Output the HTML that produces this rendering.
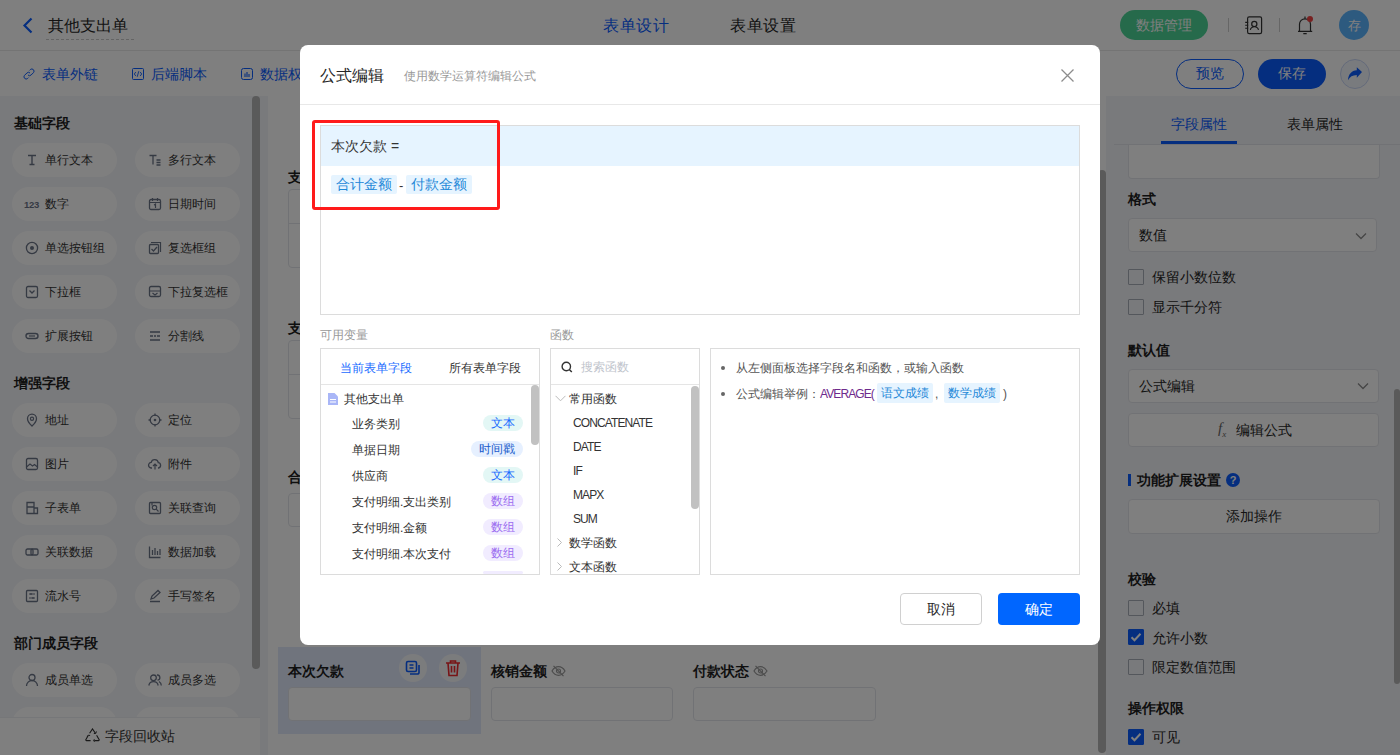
<!DOCTYPE html>
<html><head><meta charset="utf-8">
<style>
*{box-sizing:border-box;margin:0;padding:0}
html,body{width:1400px;height:755px;overflow:hidden;background:#fff}
body{font-family:"Liberation Sans",sans-serif;color:#262626;position:relative}
.a{position:absolute}
.t{position:absolute;white-space:nowrap;line-height:1}
/* header */
#hdr{left:0;top:0;width:1400px;height:51px;background:#fff;border-bottom:1px solid #e8e8e8}
#tb{left:0;top:51px;width:1400px;height:45px;background:#fff}
#lp{left:0;top:96px;width:260px;height:659px;background:#f3f4f8}
#cv{left:260px;top:96px;width:846px;height:659px;background:#fff}
#rp{left:1106px;top:96px;width:294px;height:659px;background:#f3f4f8}
.pill{position:absolute;width:105px;height:34px;border-radius:17px;background:#fff}
.pill .ic{position:absolute;left:13px;top:10px;width:14px;height:14px;overflow:visible}
.pill .tx{position:absolute;left:33px;top:10px;font-size:12px;line-height:14px;color:#333;white-space:nowrap}
.sec{position:absolute;left:14px;font-size:14px;font-weight:bold;color:#1f1f1f;line-height:1}
.b{font-weight:bold;color:#1f1f1f}
.inp{background:#fff;border:1px solid #e3e5ea;border-radius:4px}
.cb{width:16px;height:16px;border:1px solid #a9aeb8;background:transparent;border-radius:1px}
.cb.on{background:#0a5cff;border-color:#0a5cff}
.cb svg{position:absolute;left:-1px;top:-1px}
.box{border:1px solid #dcdcdc;background:#fff}
.tag{height:16px;border-radius:8px;padding:0 8px;font-size:12px;line-height:17px;white-space:nowrap}
.tag.tx{background:#e3f7f5;color:#1a6cff}
.tag.ts{background:#e6f0ff;color:#1a5ccc}
.tag.arr{background:#f1ecff;color:#9b6cf0}
.tok{height:19px;background:#e6f4ff;color:#1e88d8;font-size:14px;line-height:19px;text-align:center;border-radius:2px;white-space:nowrap}
.tok.sm{height:20px;font-size:12px;line-height:20px}
.fn{font-size:12px;color:#333;line-height:12px;letter-spacing:-0.9px}
.mask{position:absolute;left:0;top:0;width:1400px;height:755px;background:rgba(0,0,0,.5)}
.modal{position:absolute;left:300px;top:45px;width:800px;height:600px;background:#fff;border-radius:8px}
</style></head>
<body>
<!-- ===== background app ===== -->
<div id="hdr" class="a">
  <svg class="a" style="left:22px;top:17px" width="12" height="17" viewBox="0 0 12 17"><path d="M9.5 1.5 L2.5 8.5 L9.5 15.5" fill="none" stroke="#0a5cff" stroke-width="2.2"/></svg>
  <div class="t" style="left:48px;top:18px;font-size:16px;color:#262626">其他支出单</div>
  <div class="a" style="left:46px;top:39px;width:88px;border-top:1px dashed #c8c8c8"></div>
  <div class="t" style="left:603px;top:18px;font-size:16px;color:#0a5cff;letter-spacing:0.7px">表单设计</div>
  <div class="t" style="left:730px;top:18px;font-size:16px;color:#262626;letter-spacing:0.7px">表单设置</div>
  <div class="a" style="left:1120px;top:10px;width:88px;height:30px;border-radius:15px;background:#4cd496"></div>
  <div class="t" style="left:1136px;top:18px;font-size:14px;color:#fff">数据管理</div>
  <div class="a" style="left:1228px;top:18px;width:1px;height:14px;background:#ccc"></div>
  <div class="a" style="left:1279px;top:18px;width:1px;height:14px;background:#ccc"></div>

  <svg class="a" style="left:1244px;top:16px" width="20" height="19" viewBox="0 0 20 19"><rect x="3.6" y="0.8" width="14" height="16.8" rx="1.6" fill="none" stroke="#333" stroke-width="1.2"/><circle cx="10.3" cy="7.9" r="2.6" fill="none" stroke="#333" stroke-width="1.2"/><path d="M6.3 13.9a4.2 4 0 0 1 8.2 0" fill="none" stroke="#333" stroke-width="1.2"/><path d="M1.2 6.4h3M1.2 9.3h3M1.2 12.2h3" stroke="#333" stroke-width="1.1"/></svg>
  <svg class="a" style="left:1296px;top:15px" width="19" height="20" viewBox="0 0 19 20"><path d="M2 16.3h14.2M3.5 16.3V9.3a5.5 5.5 0 0 1 11 0v7M7.3 18.7h3.4M9 1.6v1.6" fill="none" stroke="#333" stroke-width="1.2"/><circle cx="14" cy="4" r="3" fill="#f04242"/></svg>
  <div class="a" style="left:1339px;top:10px;width:30px;height:30px;border-radius:15px;background:#5ab4ff"></div>
  <div class="t" style="left:1348px;top:19px;font-size:13px;color:#fff">存</div>
</div>
<div id="tb" class="a">

  <svg class="a" style="left:23px;top:17px" width="12" height="12" viewBox="0 0 12 12"><path d="M5 7a2.2 2.2 0 0 0 3.1 0l2.4-2.4a2.2 2.2 0 0 0-3.1-3.1L6.5 2.4M7 5a2.2 2.2 0 0 0-3.1 0L1.5 7.4a2.2 2.2 0 0 0 3.1 3.1L5.5 9.6" fill="none" stroke="#0a5cff" stroke-width="1"/></svg>
  <svg class="a" style="left:132px;top:17px" width="12" height="12" viewBox="0 0 12 12"><rect x="0.5" y="0.5" width="11" height="11" rx="1" fill="none" stroke="#0a5cff" stroke-width="1"/><path d="M3.8 4L2.3 6l1.5 2M8.2 4l1.5 2-1.5 2M6.8 3.2L5.2 8.8" fill="none" stroke="#0a5cff" stroke-width="0.9"/></svg>
  <svg class="a" style="left:241px;top:17px" width="12" height="12" viewBox="0 0 12 12"><rect x="0.5" y="0.5" width="11" height="11" rx="2" fill="none" stroke="#0a5cff" stroke-width="1"/><path d="M4 5.5v3.5M6 4v5M8 6v3" stroke="#0a5cff" stroke-width="1.1"/></svg>
  <div class="t" style="left:42px;top:16px;font-size:14px;color:#0a5cff">表单外链</div>
  <div class="t" style="left:151px;top:16px;font-size:14px;color:#0a5cff">后端脚本</div>
  <div class="t" style="left:260px;top:16px;font-size:14px;color:#0a5cff">数据权限</div>
  <div class="a" style="left:1176px;top:8px;width:68px;height:30px;border-radius:15px;border:1px solid #0a5cff"></div>
  <div class="t" style="left:1196px;top:15px;font-size:14px;color:#0a5cff">预览</div>
  <div class="a" style="left:1258px;top:8px;width:68px;height:30px;border-radius:15px;background:#0a5cff"></div>
  <div class="t" style="left:1278px;top:15px;font-size:14px;color:#fff">保存</div>
  <div class="a" style="left:1340px;top:8px;width:30px;height:30px;border-radius:15px;border:1px solid #c9d6f5;background:#f3f6fd"></div>
  <svg class="a" style="left:1347px;top:16px" width="16" height="15" viewBox="0 0 16 15"><path d="M15 5L9.8 0.3v3C4.5 3.5 1.3 7.5 1 13.2c1.8-3.5 4.6-5 8.8-5.2v2.8z" fill="#0a5cff"/></svg>

</div>
<div id="lp" class="a">
  <div class="sec" style="top:20px">基础字段</div>
  <div class="sec" style="top:280px">增强字段</div>
  <div class="sec" style="top:540px">部门成员字段</div>
<div class="pill" style="left:12px;top:47px"><svg class="ic" viewBox="0 0 14 14"><path d="M3 2.5h8M7 2.5v9M4.5 11.5h5" fill="none" stroke="#6b7487" stroke-width="1.4"/></svg><div class="tx">单行文本</div></div>
<div class="pill" style="left:135px;top:47px"><svg class="ic" viewBox="0 0 14 14"><path d="M1.5 2.5h7M5 2.5v9M8.5 7h4M8.5 9.5h4M8.5 12h4" fill="none" stroke="#6b7487" stroke-width="1.3"/></svg><div class="tx">多行文本</div></div>
<div class="pill" style="left:12px;top:91px"><svg class="ic" viewBox="0 0 14 14"><text x="-1" y="10.5" font-size="9.5" font-weight="bold" fill="#6b7487" font-family="Liberation Sans" letter-spacing="-0.3">123</text></svg><div class="tx">数字</div></div>
<div class="pill" style="left:135px;top:91px"><svg class="ic" viewBox="0 0 14 14"><rect x="1.5" y="2.5" width="11" height="10" rx="1.5" fill="none" stroke="#6b7487" stroke-width="1.3"/><path d="M4.5 1v3M9.5 1v3M1.5 5.5h11M6 8l1.5-1v4" fill="none" stroke="#6b7487" stroke-width="1.2"/></svg><div class="tx">日期时间</div></div>
<div class="pill" style="left:12px;top:135px"><svg class="ic" viewBox="0 0 14 14"><circle cx="7" cy="7" r="5.6" fill="none" stroke="#6b7487" stroke-width="1.3"/><circle cx="7" cy="7" r="2" fill="#6b7487"/></svg><div class="tx">单选按钮组</div></div>
<div class="pill" style="left:135px;top:135px"><svg class="ic" viewBox="0 0 14 14"><path d="M3 1.5h9.5v9.5" fill="none" stroke="#6b7487" stroke-width="1.2"/><rect x="1.5" y="3.5" width="9" height="9" rx="1" fill="none" stroke="#6b7487" stroke-width="1.3"/><path d="M3.5 8l2 2 3.5-4" fill="none" stroke="#6b7487" stroke-width="1.3"/></svg><div class="tx">复选框组</div></div>
<div class="pill" style="left:12px;top:179px"><svg class="ic" viewBox="0 0 14 14"><rect x="1.5" y="1.5" width="11" height="11" rx="1.5" fill="none" stroke="#6b7487" stroke-width="1.3"/><path d="M4.5 5.5l2.5 2.5 2.5-2.5" fill="none" stroke="#6b7487" stroke-width="1.3"/></svg><div class="tx">下拉框</div></div>
<div class="pill" style="left:135px;top:179px"><svg class="ic" viewBox="0 0 14 14"><rect x="1.5" y="1.5" width="11" height="10" rx="1.5" fill="none" stroke="#6b7487" stroke-width="1.3"/><path d="M1.5 6h11M4.5 8l2.5 2 2.5-2" fill="none" stroke="#6b7487" stroke-width="1.2"/></svg><div class="tx">下拉复选框</div></div>
<div class="pill" style="left:12px;top:223px"><svg class="ic" viewBox="0 0 14 14"><rect x="1" y="4.5" width="12" height="5" rx="2.5" fill="none" stroke="#6b7487" stroke-width="1.4"/><path d="M4 7h6" stroke="#6b7487" stroke-width="1.2"/></svg><div class="tx">扩展按钮</div></div>
<div class="pill" style="left:135px;top:223px"><svg class="ic" viewBox="0 0 14 14"><path d="M2 3h10M2 11h10M2 7h3M6 7h2M9 7h3" fill="none" stroke="#6b7487" stroke-width="1.3"/></svg><div class="tx">分割线</div></div>
<div class="pill" style="left:12px;top:307px"><svg class="ic" viewBox="0 0 14 14"><path d="M7 13s-4.5-4.2-4.5-7.3a4.5 4.5 0 0 1 9 0C11.5 8.8 7 13 7 13z" fill="none" stroke="#6b7487" stroke-width="1.3"/><circle cx="7" cy="5.8" r="1.6" fill="none" stroke="#6b7487" stroke-width="1.2"/></svg><div class="tx">地址</div></div>
<div class="pill" style="left:135px;top:307px"><svg class="ic" viewBox="0 0 14 14"><circle cx="7" cy="7" r="4.8" fill="none" stroke="#6b7487" stroke-width="1.3"/><circle cx="7" cy="7" r="1.3" fill="#6b7487"/><path d="M7 0.5v2.5M7 11v2.5M0.5 7h2.5M11 7h2.5" stroke="#6b7487" stroke-width="1.3"/></svg><div class="tx">定位</div></div>
<div class="pill" style="left:12px;top:351px"><svg class="ic" viewBox="0 0 14 14"><rect x="1.5" y="1.5" width="11" height="11" rx="1.5" fill="none" stroke="#6b7487" stroke-width="1.3"/><path d="M1.5 10l3.5-3 2.5 2 2-1.5 3 2.5" fill="none" stroke="#6b7487" stroke-width="1.2"/></svg><div class="tx">图片</div></div>
<div class="pill" style="left:135px;top:351px"><svg class="ic" viewBox="0 0 14 14"><path d="M4 11H3.5a2.8 2.8 0 0 1 -0.3-5.6 3.6 3.6 0 0 1 7.1 0.3 2.7 2.7 0 0 1 0.2 5.3H10" fill="none" stroke="#6b7487" stroke-width="1.3"/><path d="M7 12.5V7M5 9l2-2 2 2" fill="none" stroke="#6b7487" stroke-width="1.2"/></svg><div class="tx">附件</div></div>
<div class="pill" style="left:12px;top:395px"><svg class="ic" viewBox="0 0 14 14"><path d="M2 1.5h7v11H2zM2 6h7M9 7h3.5v5.5H9" fill="none" stroke="#6b7487" stroke-width="1.3"/></svg><div class="tx">子表单</div></div>
<div class="pill" style="left:135px;top:395px"><svg class="ic" viewBox="0 0 14 14"><rect x="1.5" y="1.5" width="11" height="11" rx="1" fill="none" stroke="#6b7487" stroke-width="1.3"/><circle cx="6.5" cy="6.5" r="2.2" fill="none" stroke="#6b7487" stroke-width="1.2"/><path d="M8.2 8.2l2.3 2.3M4 1.5v3" stroke="#6b7487" stroke-width="1.2"/></svg><div class="tx">关联查询</div></div>
<div class="pill" style="left:12px;top:439px"><svg class="ic" viewBox="0 0 14 14"><rect x="1" y="4" width="7" height="6" rx="1.5" fill="none" stroke="#6b7487" stroke-width="1.3"/><rect x="6" y="4" width="7" height="6" rx="1.5" fill="none" stroke="#6b7487" stroke-width="1.3"/></svg><div class="tx">关联数据</div></div>
<div class="pill" style="left:135px;top:439px"><svg class="ic" viewBox="0 0 14 14"><path d="M1.5 1.5v11h11M4.5 5v5M7 3v7M9.5 6v4M12 4v6" fill="none" stroke="#6b7487" stroke-width="1.3"/></svg><div class="tx">数据加载</div></div>
<div class="pill" style="left:12px;top:483px"><svg class="ic" viewBox="0 0 14 14"><rect x="1.5" y="1.5" width="11" height="11" rx="1" fill="none" stroke="#6b7487" stroke-width="1.3"/><path d="M4 5h6M4 9h6M6 4v2M8 8v2" stroke="#6b7487" stroke-width="1.2"/></svg><div class="tx">流水号</div></div>
<div class="pill" style="left:135px;top:483px"><svg class="ic" viewBox="0 0 14 14"><path d="M2 12.5h10M3 10l1-3 6-5.5 2 2-6 5.5z" fill="none" stroke="#6b7487" stroke-width="1.3"/></svg><div class="tx">手写签名</div></div>
<div class="pill" style="left:12px;top:567px"><svg class="ic" viewBox="0 0 14 14"><circle cx="7" cy="4.5" r="3" fill="none" stroke="#6b7487" stroke-width="1.3"/><path d="M1.5 13a5.5 5.5 0 0 1 11 0" fill="none" stroke="#6b7487" stroke-width="1.3"/></svg><div class="tx">成员单选</div></div>
<div class="pill" style="left:135px;top:567px"><svg class="ic" viewBox="0 0 14 14"><circle cx="5.5" cy="4.8" r="2.8" fill="none" stroke="#6b7487" stroke-width="1.3"/><path d="M0.8 12.5a4.8 4.8 0 0 1 9.4 0M9 2a2.6 2.6 0 0 1 0.5 5.2M11 8.5a4.5 4.5 0 0 1 2.3 4" fill="none" stroke="#6b7487" stroke-width="1.3"/></svg><div class="tx">成员多选</div></div>
<div class="pill" style="left:12px;top:611px"><svg class="ic" viewBox="0 0 14 14"><circle cx="7" cy="4.5" r="3" fill="none" stroke="#6b7487" stroke-width="1.3"/><path d="M1.5 13a5.5 5.5 0 0 1 11 0" fill="none" stroke="#6b7487" stroke-width="1.3"/></svg><div class="tx">部门单选</div></div>
<div class="pill" style="left:135px;top:611px"><svg class="ic" viewBox="0 0 14 14"><circle cx="5.5" cy="4.8" r="2.8" fill="none" stroke="#6b7487" stroke-width="1.3"/><path d="M0.8 12.5a4.8 4.8 0 0 1 9.4 0M9 2a2.6 2.6 0 0 1 0.5 5.2M11 8.5a4.5 4.5 0 0 1 2.3 4" fill="none" stroke="#6b7487" stroke-width="1.3"/></svg><div class="tx">部门多选</div></div>
  <div class="a" style="left:252px;top:0;width:8px;height:573px;border-radius:4px;background:#b5b5b5"></div>
  <div class="a" style="left:0;top:621px;width:260px;height:38px;background:#fff;border-top:1px solid #eceef2"></div>
  <svg class="a" style="left:85px;top:632px" width="15" height="14" viewBox="0 0 15 14"><path d="M4.6 5.2L7.5 0.9l2.9 4.3M11.6 7.2l2.6 4.6a0.6 0.6 0 0 1-0.5 0.8H9.2M5.6 12.6H1.3a0.6 0.6 0 0 1-0.5-0.8l2.4-4.4" fill="none" stroke="#333" stroke-width="1.1"/><path d="M8.8 5.6l2-0.2 0.6-2M9.4 11.2l-0.9 1.4 1 1.2M2.2 8.8l1.1-1.6 1.8 0.3" fill="none" stroke="#333" stroke-width="1"/></svg>
  <div class="t" style="left:105px;top:633px;font-size:14px;color:#333">字段回收站</div>
</div>
<div id="cv" class="a">
  <div class="a" style="left:0;top:0;width:8px;height:659px;background:#f3f4f8"></div>
  <div class="t b" style="left:28px;top:74px;font-size:14px">支付明细</div>
  <div class="a" style="left:28px;top:93px;width:700px;height:79px;border:1px solid #e3e5ea;border-radius:4px"></div>
  <div class="a" style="left:28px;top:127px;width:700px;height:1px;background:#e3e5ea"></div>
  <div class="t b" style="left:28px;top:225px;font-size:14px">支付明细</div>
  <div class="a" style="left:28px;top:244px;width:700px;height:79px;border:1px solid #e3e5ea;border-radius:4px"></div>
  <div class="a" style="left:28px;top:278px;width:700px;height:1px;background:#e3e5ea"></div>
  <div class="t b" style="left:28px;top:374px;font-size:14px">合计金额</div>
  <div class="a" style="left:28px;top:397px;width:183px;height:34px;border:1px solid #e3e5ea;border-radius:4px"></div>
  <div class="a" style="left:18px;top:551px;width:203px;height:87px;background:#e1e9fb"></div>
  <div class="t b" style="left:28px;top:568px;font-size:14px">本次欠款</div>
  <div class="a" style="left:139px;top:558px;width:28px;height:28px;border-radius:14px;background:#f7f8fb"></div>
  <svg class="a" style="left:145px;top:564px" width="16" height="16" viewBox="0 0 16 16"><rect x="1.5" y="1.5" width="10" height="10" rx="1.5" fill="none" stroke="#0a5cff" stroke-width="1.6"/><path d="M4.5 5h4M4.5 8h4M14 5v7.5a1.5 1.5 0 0 1-1.5 1.5H5" fill="none" stroke="#0a5cff" stroke-width="1.6"/></svg>
  <div class="a" style="left:179px;top:558px;width:28px;height:28px;border-radius:14px;background:#f7f8fb"></div>
  <svg class="a" style="left:185px;top:563px" width="16" height="18" viewBox="0 0 16 18"><path d="M1 4h14M5.5 4V2h5v2M3 4l1 12.5h8L13 4M6.5 7v6.5M9.5 7v6.5" fill="none" stroke="#f0282d" stroke-width="1.6"/></svg>
  <div class="a" style="left:28px;top:591px;width:183px;height:34px;border:1px solid #e3e5ea;border-radius:4px;background:#fff"></div>
  <div class="t b" style="left:231px;top:568px;font-size:14px">核销金额</div>
  <svg class="a" style="left:291px;top:569px" width="15" height="12" viewBox="0 0 15 12"><path d="M1 6c1.8-3 4-4.3 6.5-4.3S12.2 3 14 6c-1.8 3-4 4.3-6.5 4.3S2.8 9 1 6z" fill="none" stroke="#999" stroke-width="1.2"/><circle cx="7.5" cy="6" r="2" fill="none" stroke="#999" stroke-width="1.2"/><path d="M2.5 0.8l10 10.4" stroke="#999" stroke-width="1.2"/></svg>
  <div class="a" style="left:231px;top:591px;width:182px;height:34px;border:1px solid #e3e5ea;border-radius:4px"></div>
  <div class="t b" style="left:433px;top:568px;font-size:14px">付款状态</div>
  <svg class="a" style="left:493px;top:569px" width="15" height="12" viewBox="0 0 15 12"><path d="M1 6c1.8-3 4-4.3 6.5-4.3S12.2 3 14 6c-1.8 3-4 4.3-6.5 4.3S2.8 9 1 6z" fill="none" stroke="#999" stroke-width="1.2"/><circle cx="7.5" cy="6" r="2" fill="none" stroke="#999" stroke-width="1.2"/><path d="M2.5 0.8l10 10.4" stroke="#999" stroke-width="1.2"/></svg>
  <div class="a" style="left:433px;top:591px;width:183px;height:34px;border:1px solid #e3e5ea;border-radius:4px"></div>
  <div class="a" style="left:838px;top:74px;width:8px;height:583px;border-radius:4px;background:#b5b5b5"></div>
</div>
<div id="rp" class="a">
  <div class="a" style="left:22px;top:49px;width:252px;height:34px;background:#fff;border:1px solid #e3e5ea;border-top:none;border-radius:0 0 4px 4px"></div>
  <div class="a" style="left:0;top:0;width:294px;height:48px;background:#f3f4f8"></div>
  <div class="t" style="left:65px;top:21px;font-size:14px;color:#0a5cff">字段属性</div>
  <div class="t" style="left:181px;top:21px;font-size:14px;color:#262626">表单属性</div>
  <div class="a" style="left:8px;top:48px;width:286px;height:1px;background:#e3e5ea"></div>
  <div class="a" style="left:55px;top:45px;width:76px;height:3px;background:#0a5cff"></div>
  <div class="t b" style="left:22px;top:96px;font-size:14px">格式</div>
  <div class="a inp" style="left:22px;top:122px;width:249px;height:34px"></div>
  <div class="t" style="left:33px;top:132px;font-size:14px;color:#262626">数值</div>
  <svg class="a" style="left:249px;top:136px" width="12" height="8" viewBox="0 0 12 8"><path d="M1 1.5l5 5 5-5" fill="none" stroke="#8c8c8c" stroke-width="1.3"/></svg>
  <div class="a cb" style="left:22px;top:173px"></div>
  <div class="t" style="left:46px;top:174px;font-size:14px;color:#262626">保留小数位数</div>
  <div class="a cb" style="left:22px;top:203px"></div>
  <div class="t" style="left:46px;top:204px;font-size:14px;color:#262626">显示千分符</div>
  <div class="t b" style="left:22px;top:247px;font-size:14px">默认值</div>
  <div class="a inp" style="left:22px;top:273px;width:251px;height:34px"></div>
  <div class="t" style="left:33px;top:283px;font-size:14px;color:#262626">公式编辑</div>
  <svg class="a" style="left:251px;top:286px" width="12" height="8" viewBox="0 0 12 8"><path d="M1 1.5l5 5 5-5" fill="none" stroke="#8c8c8c" stroke-width="1.3"/></svg>
  <div class="a inp" style="left:22px;top:317px;width:251px;height:34px"></div>
  <div class="t" style="left:112px;top:325px;font-size:15px;font-style:italic;font-family:'Liberation Serif',serif;color:#666">f<sub style="font-size:9px">x</sub></div>
  <div class="t" style="left:130px;top:327px;font-size:14px;color:#262626">编辑公式</div>
  <div class="a" style="left:22px;top:378px;width:3px;height:12px;background:#0a5cff"></div>
  <div class="t b" style="left:31px;top:377px;font-size:14px">功能扩展设置</div>
  <div class="a" style="left:120px;top:377px;width:14px;height:14px;border-radius:7px;background:#0a5cff;color:#fff;font-size:11px;font-weight:bold;line-height:14px;text-align:center">?</div>
  <div class="a inp" style="left:22px;top:403px;width:252px;height:35px"></div>
  <div class="t" style="left:120px;top:413px;font-size:14px;color:#262626">添加操作</div>
  <div class="t b" style="left:22px;top:476px;font-size:14px">校验</div>
  <div class="a cb" style="left:22px;top:504px"></div>
  <div class="t" style="left:46px;top:505px;font-size:14px;color:#262626">必填</div>
  <div class="a cb on" style="left:22px;top:533px"><svg width="16" height="16" viewBox="0 0 16 16"><path d="M3.5 8.2l3 3 6-6.4" fill="none" stroke="#fff" stroke-width="2"/></svg></div>
  <div class="t" style="left:46px;top:535px;font-size:14px;color:#262626">允许小数</div>
  <div class="a cb" style="left:22px;top:563px"></div>
  <div class="t" style="left:46px;top:564px;font-size:14px;color:#262626">限定数值范围</div>
  <div class="t b" style="left:22px;top:605px;font-size:14px">操作权限</div>
  <div class="a cb on" style="left:22px;top:633px"><svg width="16" height="16" viewBox="0 0 16 16"><path d="M3.5 8.2l3 3 6-6.4" fill="none" stroke="#fff" stroke-width="2"/></svg></div>
  <div class="t" style="left:46px;top:634px;font-size:14px;color:#262626">可见</div>
  <div class="a" style="left:288px;top:293px;width:6px;height:295px;border-radius:3px;background:#b5b5b5"></div>
</div>

<div class="mask"></div>
<!-- ===== modal ===== -->
<div class="modal">
  <div class="t" style="left:20px;top:23px;font-size:16px;color:#262626">公式编辑</div>
  <div class="t" style="left:104px;top:25px;font-size:12px;color:#999">使用数学运算符编辑公式</div>
  <svg class="a" style="left:760px;top:23px" width="15" height="15" viewBox="0 0 15 15"><path d="M1.5 1.5l12 12M13.5 1.5l-12 12" stroke="#8c8c8c" stroke-width="1.3"/></svg>
  <div class="a" style="left:0;top:59px;width:800px;height:1px;background:#e8e8e8"></div>
  <!-- editor -->
  <div class="a" style="left:20px;top:80px;width:760px;height:190px;border:1px solid #dcdcdc"></div>
  <div class="a" style="left:21px;top:81px;width:758px;height:40px;background:#e6f4ff"></div>
  <div class="t" style="left:31px;top:94px;font-size:14px;color:#333">本次欠款 =</div>
  <div class="a tok" style="left:31px;top:130px;width:66px">合计金额</div>
  <div class="t" style="left:99px;top:134px;font-size:13px;color:#333">-</div>
  <div class="a tok" style="left:106px;top:130px;width:66px">付款金额</div>
  <div class="a" style="left:12px;top:75px;width:188px;height:90px;border:3px solid #ff1a1a;border-radius:3px"></div>
  <!-- labels -->
  <div class="t" style="left:20px;top:284px;font-size:12px;color:#999">可用变量</div>
  <div class="t" style="left:250px;top:284px;font-size:12px;color:#999">函数</div>
  <!-- var box -->
  <div class="a box" style="left:20px;top:303px;width:220px;height:227px"></div>
  <div class="t" style="left:40px;top:317px;font-size:12px;color:#1a6cff">当前表单字段</div>
  <div class="t" style="left:149px;top:317px;font-size:12px;color:#333">所有表单字段</div>
  <div class="a" style="left:21px;top:339px;width:218px;height:1px;background:#e5e5e5"></div>
  <div class="a" style="left:231px;top:340px;width:8px;height:60px;border-radius:4px;background:#c1c1c1"></div>
  <svg class="a" style="left:28px;top:348px" width="10" height="12" viewBox="0 0 10 12"><path d="M0 0h6.5l3.5 3.5V12H0z" fill="#a9b6f7"/><path d="M2 6.5h6M2 9h6" stroke="#fff" stroke-width="1"/></svg>
  <div class="t" style="left:44px;top:348px;font-size:12px;color:#333">其他支出单</div>
  <div class="t" style="left:52px;top:373px;font-size:12px;line-height:12px;color:#333">业务类别</div><div class="a tag tx" style="right:577px;top:370px">文本</div><div class="t" style="left:52px;top:399px;font-size:12px;line-height:12px;color:#333">单据日期</div><div class="a tag ts" style="right:577px;top:396px">时间戳</div><div class="t" style="left:52px;top:425px;font-size:12px;line-height:12px;color:#333">供应商</div><div class="a tag tx" style="right:577px;top:422px">文本</div><div class="t" style="left:52px;top:451px;font-size:12px;line-height:12px;color:#333">支付明细.支出类别</div><div class="a tag arr" style="right:577px;top:448px">数组</div><div class="t" style="left:52px;top:477px;font-size:12px;line-height:12px;color:#333">支付明细.金额</div><div class="a tag arr" style="right:577px;top:474px">数组</div><div class="t" style="left:52px;top:503px;font-size:12px;line-height:12px;color:#333">支付明细.本次支付</div><div class="a tag arr" style="right:577px;top:500px">数组</div><div class="a tag arr" style="right:577px;top:526px;height:3px;width:40px"></div>
  <!-- func box -->
  <div class="a box" style="left:250px;top:303px;width:150px;height:227px"></div>
  <svg class="a" style="left:261px;top:316px" width="12" height="12" viewBox="0 0 12 12"><circle cx="5.3" cy="5.5" r="4.2" fill="none" stroke="#333" stroke-width="1.4"/><path d="M8.3 8.5l2.5 2.5" stroke="#333" stroke-width="1.5"/></svg>
  <div class="t" style="left:281px;top:316px;font-size:12px;color:#c0c4cc">搜索函数</div>
  <div class="a" style="left:251px;top:339px;width:148px;height:1px;background:#e5e5e5"></div>
  <div class="a" style="left:391px;top:341px;width:8px;height:123px;border-radius:4px;background:#c1c1c1"></div>
  <svg class="a" style="left:255px;top:350px" width="11" height="7" viewBox="0 0 11 7"><path d="M0.5 0.8l5 5 5-5" fill="none" stroke="#bbb" stroke-width="1"/></svg>
  <div class="t" style="left:269px;top:348px;font-size:12px;color:#333">常用函数</div>
  <div class="t fn" style="left:273px;top:372px">CONCATENATE</div><div class="t fn" style="left:273px;top:396px">DATE</div><div class="t fn" style="left:273px;top:420px">IF</div><div class="t fn" style="left:273px;top:444px">MAPX</div><div class="t fn" style="left:273px;top:468px">SUM</div>
  <svg class="a" style="left:257px;top:493px" width="5" height="9" viewBox="0 0 5 9"><path d="M0.5 0.5l4 4-4 4" fill="none" stroke="#bbb" stroke-width="1"/></svg>
  <div class="t" style="left:269px;top:492px;font-size:12px;color:#333">数学函数</div>
  <svg class="a" style="left:257px;top:517px" width="5" height="9" viewBox="0 0 5 9"><path d="M0.5 0.5l4 4-4 4" fill="none" stroke="#bbb" stroke-width="1"/></svg>
  <div class="t" style="left:269px;top:516px;font-size:12px;color:#333">文本函数</div>
  <!-- desc box -->
  <div class="a box" style="left:410px;top:303px;width:370px;height:227px"></div>
  <div class="a" style="left:421px;top:321px;width:4px;height:4px;border-radius:2px;background:#666"></div>
  <div class="t" style="left:436px;top:317px;font-size:12px;color:#555">从左侧面板选择字段名和函数，或输入函数</div>
  <div class="a" style="left:421px;top:347px;width:4px;height:4px;border-radius:2px;background:#666"></div>
  <div class="t" style="left:436px;top:343px;font-size:12px;color:#555">公式编辑举例：<span style="color:#6e2a8c;letter-spacing:-0.9px">AVERAGE(</span></div>
  <div class="a tok sm" style="left:577px;top:338px;width:56px">语文成绩</div>
  <div class="t" style="left:635px;top:343px;font-size:12px;color:#555">,</div>
  <div class="a tok sm" style="left:644px;top:338px;width:56px">数学成绩</div>
  <div class="t" style="left:703px;top:343px;font-size:12px;color:#555">)</div>
  <!-- buttons -->
  <div class="a" style="left:600px;top:548px;width:82px;height:32px;border:1px solid #d0d0d0;border-radius:4px;background:#fff;font-size:14px;line-height:30px;text-align:center;color:#262626">取消</div>
  <div class="a" style="left:698px;top:548px;width:82px;height:32px;border-radius:4px;background:#0066ff;font-size:14px;line-height:32px;text-align:center;color:#fff">确定</div>
</div>
</body></html>
